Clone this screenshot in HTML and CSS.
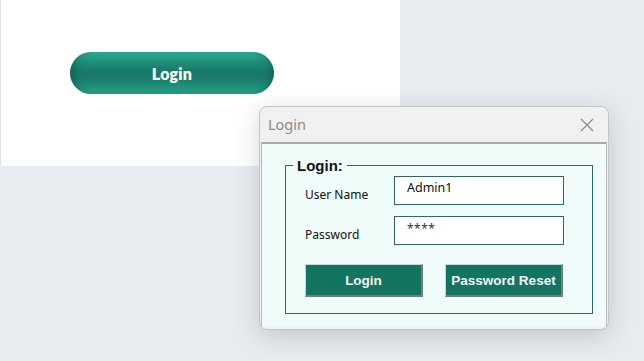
FILE: index.html
```html
<!DOCTYPE html>
<html>
<head>
<meta charset="utf-8">
<link rel="stylesheet" href="styles.css">
</head>
<body>
<div class="panel">
  <button class="pill">Login</button>
</div>

<div class="dialog">
  <div class="titlebar">
    <span class="title">Login</span>
    <svg class="close" width="14" height="14" viewBox="0 0 14 14"><path d="M1 1L13 13M13 1L1 13" stroke="#8a8a8a" stroke-width="1.2" fill="none"/></svg>
  </div>
  <div class="body">
    <fieldset class="group">
      <legend class="legend">Login:</legend>
      <div class="row">
        <span class="label">User Name</span>
        <div class="field">Admin1</div>
      </div>
      <div class="row">
        <span class="label">Password</span>
        <div class="field pw">****</div>
      </div>
      <div class="buttons">
        <button class="btn">Login</button>
        <button class="btn">Password Reset</button>
      </div>
    </fieldset>
  </div>
</div>
</body>
</html>
```

FILE: styles.css
```css
html, body {
  margin: 0;
  padding: 0;
}
body {
  width: 644px;
  height: 361px;
  background: #e8ecf0;
  position: relative;
  overflow: hidden;
  font-family: "Liberation Sans", Arial, sans-serif;
}
.panel {
  width: 400px;
  height: 166px;
  background: #ffffff;
  border-left: 1px solid #e2e4e6;
  padding: 52px 0 0 69px;
  box-sizing: border-box;
}
.pill {
  display: block;
  width: 204px;
  height: 42px;
  border: none;
  border-radius: 21px;
  background: linear-gradient(to bottom, #2db396 0%, #1f917b 22%, #1a7969 45%, #1a7867 60%, #1e8f7a 82%, #26a88d 100%);
  box-shadow: inset 6px 0 8px -4px rgba(0,40,30,0.35), inset -6px 0 8px -4px rgba(0,40,30,0.3);
  color: #ffffff;
  font-family: Lato, "Open Sans", sans-serif;
  font-weight: 800;
  font-size: 16px;
  letter-spacing: 0.2px;
  padding: 0;
}
.dialog {
  position: absolute;
  left: 259px;
  top: 106px;
  width: 350px;
  height: 224px;
  box-sizing: border-box;
  border: 1px solid #c4c4c4;
  border-radius: 8px;
  background: #f1f1f1;
  box-shadow: 0 6px 24px rgba(60,70,80,0.22);
  overflow: hidden;
}
.titlebar {
  height: 35px;
  display: flex;
  align-items: center;
  justify-content: space-between;
  padding: 0 14px 0 8px;
}
.title {
  font-family: "Noto Sans", "Open Sans", sans-serif;
  font-size: 14.5px;
  color: #8b8b8b;
  margin-top: -1px;
}
.body {
  margin: 0 1px 1px 1px;
  height: 184px;
  box-sizing: border-box;
  background: #f0fcfa;
  border-top: 2px solid #a9a9a9;
  border-left: 1px solid #b8b8b8;
  border-right: 1px solid #b8b8b8;
  padding: 13px 16px 0 23px;
}
.group {
  margin: 0;
  width: 308px;
  height: 157px;
  box-sizing: border-box;
  border: 1px solid #2c6a62;
  padding: 2px 0 0 19px;
}
.legend {
  font-family: "Liberation Sans", Arial, sans-serif;
  font-weight: 700;
  font-size: 15px;
  color: #111;
  padding: 0 4px;
  margin-left: -12px;
}
.row {
  display: flex;
  align-items: center;
  height: 29px;
  margin-bottom: 11px;
}
.label {
  width: 89px;
  font-family: "Noto Sans", sans-serif;
  font-size: 12px;
  color: #111;
  padding-top: 7px;
}
.field {
  width: 170px;
  height: 29px;
  box-sizing: border-box;
  border: 1px solid #2c6a62;
  background: #ffffff;
  font-family: "Noto Sans", sans-serif;
  font-size: 12.5px;
  color: #111;
  padding: 2px 0 0 12px;
}
.field.pw {
  font-size: 12px;
  padding-top: 3px;
  letter-spacing: 0.5px;
  color: #333;
}
.buttons {
  display: flex;
  gap: 22px;
  margin-top: 19px;
  padding-left: 0;
}
.btn {
  width: 118px;
  height: 33px;
  box-sizing: border-box;
  background: #137462;
  color: #f4f4f4;
  font-family: "Liberation Sans", Arial, sans-serif;
  font-weight: 700;
  font-size: 13.5px;
  border-top: 1px solid #c8d8d4;
  border-left: 1px solid #c8d8d4;
  border-right: 2px solid #7a7a7a;
  border-bottom: 2px solid #7a7a7a;
  padding: 0;
}
```
